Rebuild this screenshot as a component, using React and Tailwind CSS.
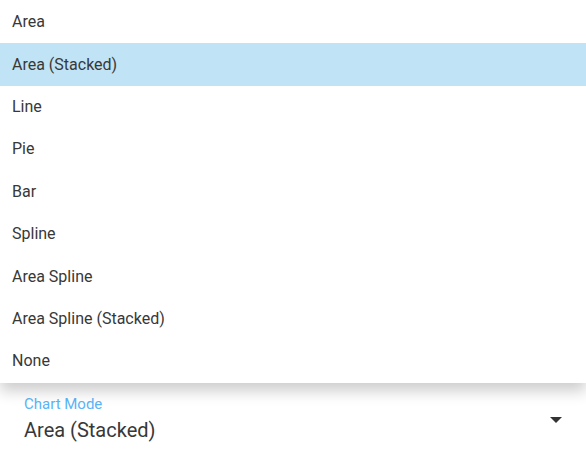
const options = [
  "Area",
  "Area (Stacked)",
  "Line",
  "Pie",
  "Bar",
  "Spline",
  "Area Spline",
  "Area Spline (Stacked)",
  "None",
]

export default function App() {
  const selected = "Area (Stacked)"

  return (
    <div className="relative w-[586px] h-[455px] bg-white overflow-hidden font-['Roboto',sans-serif]">
      {/* field underneath */}
      <div className="absolute left-0 right-0 top-[394px] pl-6 pr-[24px]">
        <div className="text-[15px] leading-5 text-[#5ab4f7]">Chart Mode</div>
        <div className="flex items-center justify-between mt-[2px]">
          <span className="text-[20px] leading-7 text-[#383838]">{selected}</span>
          <svg width="12" height="6" viewBox="0 0 12 6" className="-mt-5">
            <path d="M0 0 L12 0 L6 6 Z" fill="#333333" />
          </svg>
        </div>
      </div>

      {/* open menu */}
      <ul className="absolute left-0 top-0 w-[586px] bg-white pt-[1px] shadow-[0_8px_14px_rgba(0,0,0,0.2)]">
        {options.map((opt) => (
          <li
            key={opt}
            className={
              "h-[42.4px] flex items-center px-3 text-[16px] text-[#383838] " +
              (opt === selected ? "bg-[#c0e3f5]" : "")
            }
          >
            {opt}
          </li>
        ))}
      </ul>
    </div>
  )
}
